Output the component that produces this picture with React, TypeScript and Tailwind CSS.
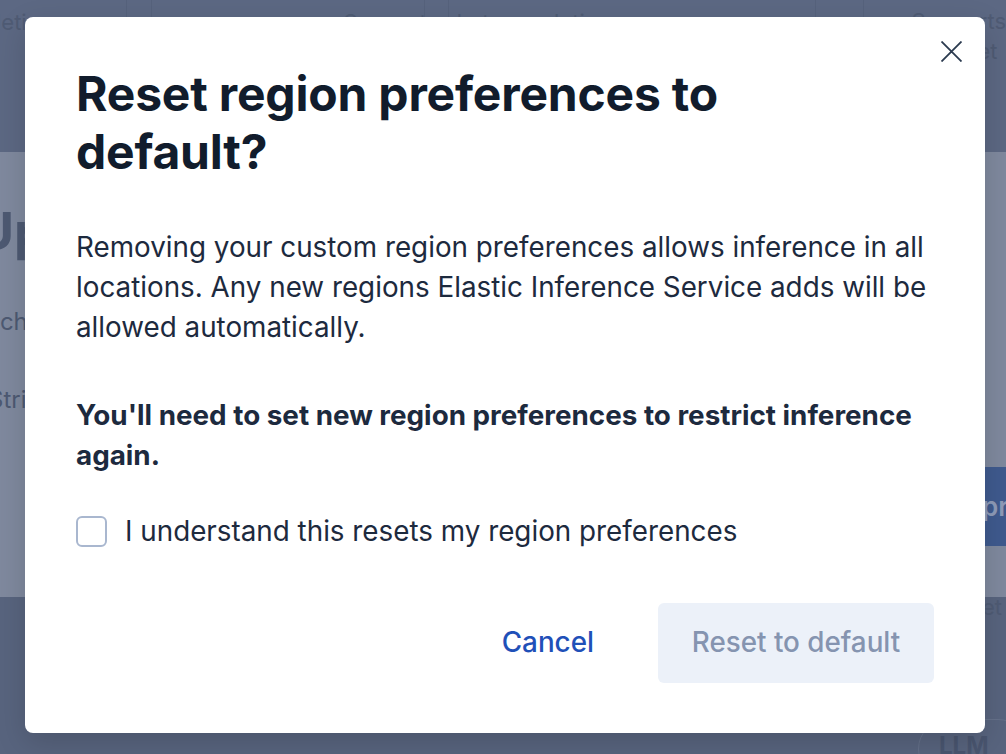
import React from "react";

export default function App() {
  const font = { fontFamily: "Inter, 'Noto Sans', sans-serif" };
  return (
    <div
      className="relative w-[1006px] h-[754px] overflow-hidden bg-[#58647e]"
      style={font}
    >
      {/* background page (dimmed) */}
      <div className="flex flex-col h-full">
        <div className="relative h-[152px] bg-[#5c6883] flex text-[#4f5b74] text-[22px]">
          <div className="w-[128px] border-r border-[#56627c] pt-[6px] overflow-hidden whitespace-nowrap">
            <span className="block -ml-[4px]">letion</span>
          </div>
          <div className="w-[25px] border-r border-[#56627c]" />
          <div className="w-[273px] border-r border-[#56627c] pt-[6px] pl-[192px] whitespace-nowrap">
            Supports chat completion
          </div>
          <div className="w-[25px] border-r border-[#56627c]" />
          <div className="w-[370px] border-r border-[#56627c]" />
          <div className="w-[48px] border-r border-[#56627c]" />
          <div className="flex-1 pt-[6px] pl-[48px] leading-[30px] whitespace-nowrap">
            Supports
            <br />
            <span className="pl-[66px]">et</span>
          </div>
        </div>
        <div className="relative h-[445px] bg-[#7f899e] text-[#4d5972]">
          <div className="flex flex-col pt-[50px] whitespace-nowrap">
            <div className="text-[52px] font-bold leading-[60px] -ml-[24px]">Up</div>
            <div className="text-[24px] mt-[42px] -ml-[28px]">Each</div>
            <div className="text-[24px] mt-[42px] -ml-[12px]">Stric</div>
          </div>
          <div className="absolute left-[960px] top-[315px] w-[120px] h-[79px] bg-[#3f5a8e] rounded-[6px] flex items-center pl-[22px] text-[26px] font-semibold text-[#8e9bb8]">
            pr
          </div>
        </div>
        <div className="relative flex-1 bg-[#58647e] text-[#4f5b74] text-[22px]">
          <div className="absolute left-[982px] top-[-6px]">et</div>
          <div className="absolute left-[918px] top-[122px] w-[110px] h-[60px] rounded-full border border-[#65718a] pt-[8px] pl-[20px] font-bold text-[24px] text-[#4a5670]">
            LLM
          </div>
        </div>
      </div>

      {/* modal */}
      <div className="absolute left-[25px] top-[17px] w-[960px] h-[716px] bg-white rounded-[8px] shadow-[0_10px_30px_rgba(0,0,0,0.15)] flex flex-col px-[51px] pt-[48px] pb-[50px] text-[#1d2a3e]">
        <button className="absolute right-[19px] top-[19px] w-[30px] h-[30px] flex items-center justify-center">
          <svg width="21" height="21" viewBox="0 0 21 21" fill="none">
            <path d="M0.5 0.5L20.5 20.5M20.5 0.5L0.5 20.5" stroke="#2b3a4f" strokeWidth="1.8" />
          </svg>
        </button>
        <h1 className="text-[48px] font-bold leading-[58px] tracking-[-0.2px] text-[#111c2c] pr-[200px]">
          Reset region preferences to default?
        </h1>
        <p className="mt-[46px] text-[27.8px] leading-[40px] text-[#1d2a3e]">
          Removing your custom region preferences allows inference in all
          locations. Any new regions Elastic Inference Service adds will be
          allowed automatically.
        </p>
        <p className="mt-[48px] text-[27.8px] leading-[40px] font-bold text-[#1d2a3e]">
          You'll need to set new region preferences to restrict inference again.
        </p>
        <label className="mt-[36px] flex items-center gap-[18px] h-[40px]">
          <span className="w-[31px] h-[31px] rounded-[6px] border-2 border-[#a9b7cf] bg-white" />
          <span className="text-[27.8px] leading-[40px] text-[#1d2a3e]">
            I understand this resets my region preferences
          </span>
        </label>
        <div className="mt-auto flex items-center justify-end gap-[64px]">
          <button className="text-[27.8px] font-medium text-[#1f50b8]">Cancel</button>
          <button className="w-[276px] h-[80px] rounded-[6px] bg-[#ecf1f9] text-[27.8px] font-medium text-[#8594b0]">
            Reset to default
          </button>
        </div>
      </div>
    </div>
  );
}
